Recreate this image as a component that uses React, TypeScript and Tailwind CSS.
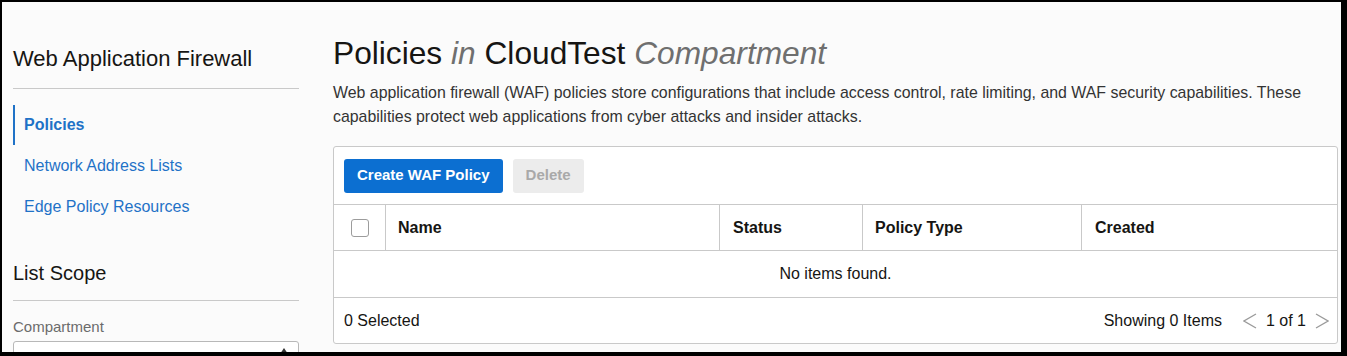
import React from "react";

const font = { fontFamily: '"Liberation Sans", Arial, sans-serif' };

function Chevron({ dir }: { dir: "left" | "right" }) {
  return (
    <svg width="14" height="20" viewBox="0 0 14 20" className="shrink-0">
      <path
        d={dir === "left" ? "M13 3 L1 10 L13 17" : "M1 3 L13 10 L1 17"}
        fill="none"
        stroke="#9a9a9a"
        strokeWidth="1.3"
      />
    </svg>
  );
}

export default function App() {
  return (
    <div
      className="w-[1347px] h-[356px] bg-black pt-[2px] pl-[2px] pr-[6px] pb-[4px] overflow-hidden"
      style={font}
    >
      <div className="w-full h-full bg-[#fbfbfb] flex overflow-hidden">
        {/* Sidebar */}
        <aside className="w-[286px] ml-[11px] shrink-0 block">
          <div className="pt-[44px] h-[86px] text-[22px] leading-[26px] text-[#161513]">
            Web Application Firewall
          </div>
          <div className="h-px bg-[#c9c9c9]" />
          <nav className="mt-[16px] flex flex-col">
            <div className="h-[40px] flex items-center border-l-2 border-[#1f72c7] pl-[9px] text-[16px] font-bold text-[#1f72c7]">
              Policies
            </div>
            <div className="h-[41px] flex items-center pl-[11px] text-[16px] text-[#1f72c7]">
              Network Address Lists
            </div>
            <div className="h-[41px] flex items-center pl-[11px] text-[16px] text-[#1f72c7]">
              Edge Policy Resources
            </div>
          </nav>
          <div className="mt-[34px] text-[20px] leading-[24px] text-[#161513]">List Scope</div>
          <div className="mt-[15px] h-px bg-[#c9c9c9]" />
          <div className="mt-[17px] text-[15px] leading-[18px] text-[#6b6b6b]">Compartment</div>
          <div className="mt-[5px] h-[30px] border border-[#b8b8b8] rounded-[3px] bg-white relative">
            <svg width="10" height="8" viewBox="0 0 10 8" className="absolute right-[9px] top-[5px]">
              <path d="M5 1 L9 7 L1 7 Z" fill="#333" />
            </svg>
          </div>
        </aside>

        {/* Main */}
        <main className="ml-[34px] flex-1 flex flex-col pr-[3px]">
          <h1 className="pt-[33px] text-[31.7px] leading-[36px] text-[#161513] font-normal">
            Policies <span className="italic text-[#6f6f6f]">in</span> CloudTest{" "}
            <span className="italic text-[#6f6f6f]">Compartment</span>
          </h1>
          <p className="mt-[10px] text-[15.9px] leading-[24px] text-[#333] pr-[30px]">
            Web application firewall (WAF) policies store configurations that include access control, rate limiting, and WAF security
            capabilities. These capabilities protect web applications from cyber attacks and insider attacks.
          </p>
          <div className="mt-[17px] border border-[#c9c9c9] rounded-[3px] bg-white flex flex-col shrink-0">
            <div className="h-[58px] flex items-center gap-[10px] px-[10px] border-b border-[#c9c9c9]">
              <button className="h-[34px] px-[13px] rounded-[3px] bg-[#0c6fd1] text-white text-[15px] font-bold">
                Create WAF Policy
              </button>
              <button className="h-[34px] px-[13px] rounded-[3px] bg-[#ececec] text-[#a9a9a9] text-[15px] font-bold">
                Delete
              </button>
            </div>
            <div className="h-[46px] flex border-b border-[#c9c9c9] text-[16px] font-bold text-[#161513]">
              <div className="w-[52px] flex items-center justify-center border-r border-[#c9c9c9]">
                <div className="w-[18px] h-[18px] border border-[#9c9c9c] rounded-[3px] bg-white" />
              </div>
              <div className="w-[334px] flex items-center pl-[12px] border-r border-[#c9c9c9]">Name</div>
              <div className="w-[143px] flex items-center pl-[13px] border-r border-[#c9c9c9]">Status</div>
              <div className="w-[219px] flex items-center pl-[12px] border-r border-[#c9c9c9]">Policy Type</div>
              <div className="flex-1 flex items-center pl-[13px]">Created</div>
            </div>
            <div className="h-[47px] flex items-center justify-center border-b border-[#c9c9c9] text-[16px] text-[#161513]">
              No items found.
            </div>
            <div className="h-[45px] flex items-center pl-[10px] pr-[8px] text-[16px] text-[#161513]">
              <span>0 Selected</span>
              <span className="ml-auto">Showing 0 Items</span>
              <span className="ml-[21px] flex items-center gap-[9px]">
                <Chevron dir="left" />
                <span>1 of 1</span>
                <Chevron dir="right" />
              </span>
            </div>
          </div>
        </main>
      </div>
    </div>
  );
}
